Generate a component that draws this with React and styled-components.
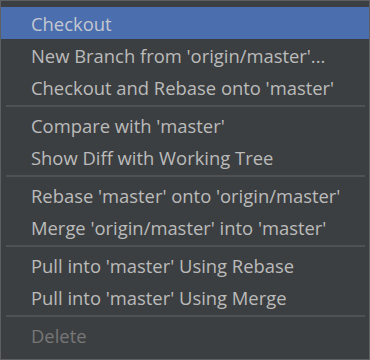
import React from "react";
import styled, { createGlobalStyle } from "styled-components";

const GlobalStyle = createGlobalStyle`
  html, body {
    margin: 0;
    padding: 0;
    background: #3c3f41;
  }
`;

const Menu = styled.div`
  width: 370px;
  height: 360px;
  box-sizing: border-box;
  border: 1px solid #5e5f60;
  background: #3c3f41;
  padding: 6px 0 8px;
  display: flex;
  flex-direction: column;
  font-family: "Open Sans", "Noto Sans", sans-serif;
  font-size: 18.4px;
  color: #bbbbbb;
`;

const Item = styled.div`
  height: 32px;
  display: flex;
  align-items: center;
  padding-left: 30px;
  white-space: nowrap;
  background: ${(p) => (p.$active ? "#4b6eaf" : "transparent")};
  color: ${(p) => (p.$disabled ? "#777777" : p.$active ? "#c4c8cf" : "#bbbbbb")};
`;

const Separator = styled.div`
  height: 6px;
  display: flex;
  align-items: center;
  padding: 0 4px 0 5px;

  &::after {
    content: "";
    flex: 1;
    height: 2px;
    background: #4f5254;
  }
`;

const groups = [
  ["Checkout", "New Branch from 'origin/master'...", "Checkout and Rebase onto 'master'"],
  ["Compare with 'master'", "Show Diff with Working Tree"],
  ["Rebase 'master' onto 'origin/master'", "Merge 'origin/master' into 'master'"],
  ["Pull into 'master' Using Rebase", "Pull into 'master' Using Merge"],
];

export default function App() {
  return (
    <>
      <GlobalStyle />
      <Menu>
        {groups.map((group, gi) => (
          <React.Fragment key={gi}>
            {group.map((label, i) => (
              <Item key={label} $active={gi === 0 && i === 0}>
                {label}
              </Item>
            ))}
            <Separator />
          </React.Fragment>
        ))}
        <Item $disabled>Delete</Item>
      </Menu>
    </>
  );
}
